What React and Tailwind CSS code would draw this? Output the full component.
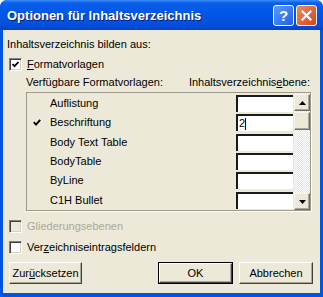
const rows = [
  { name: 'Auflistung', level: '' },
  { name: 'Beschriftung', level: '2', checked: true },
  { name: 'Body Text Table', level: '' },
  { name: 'BodyTable', level: '' },
  { name: 'ByLine', level: '' },
  { name: 'C1H Bullet', level: '' },
];

function CheckBox({ checked, disabled }) {
  return (
    <span
      className={`w-[13px] h-[13px] shrink-0 flex items-center justify-center border border-t-[#808080] border-l-[#808080] border-r-white border-b-white shadow-[inset_1px_1px_0_#404040,inset_-1px_-1px_0_#D4D0C8] ${
        disabled ? 'bg-[#ECE9D8]' : 'bg-white'
      }`}
    >
      {checked && (
        <svg width="7" height="7" viewBox="0 0 7 7">
          <path d="M0.5 3 L2.5 5.2 L6.5 1" stroke="#000" strokeWidth="1.8" fill="none" />
        </svg>
      )}
    </span>
  );
}

function Btn({ children, w, isDefault }) {
  return (
    <div className={`${w} h-[22px] ${isDefault ? 'border border-black' : ''}`}>
      <div className="w-full h-full flex items-center justify-center bg-[#ECE9D8] border border-t-white border-l-white border-r-[#404040] border-b-[#404040] shadow-[inset_-1px_-1px_0_#ACA899]">
        {children}
      </div>
    </div>
  );
}

function Arrow({ down }) {
  return (
    <div className="w-[16px] h-[17px] shrink-0 flex items-center justify-center bg-[#ECE9D8] border border-t-[#F5F4EE] border-l-[#F5F4EE] border-r-[#716F64] border-b-[#716F64] shadow-[inset_-1px_-1px_0_#ACA899]">
      <svg width="7" height="4" viewBox="0 0 7 4">
        <path d={down ? 'M0 0 H7 L3.5 4 Z' : 'M0 4 H7 L3.5 0 Z'} fill="#000" />
      </svg>
    </div>
  );
}

export default function App() {
  return (
    <div className="w-[323px] h-[297px] flex flex-col rounded-t-[7px] overflow-hidden bg-[#0054E3] font-['Liberation_Sans',Arial,sans-serif] text-[11px] leading-[13px] text-black">
      {/* title bar */}
      <div className="h-[30px] shrink-0 flex items-center pl-[7px] pr-[6px] bg-[linear-gradient(#3A8CF8_0px,#0A5FEA_3px,#0058E8_12px,#0450DD_24px,#0342C8_30px)]">
        <span className="flex-1 text-white font-bold text-[13px] [text-shadow:1px_1px_0_#0A1E6E]">
          Optionen für Inhaltsverzeichnis
        </span>
        <div className="w-[21px] h-[21px] rounded-[3px] border border-white bg-[linear-gradient(135deg,#5C9BFF,#1E5FE6)] flex items-center justify-center text-white font-bold text-[15px]">
          ?
        </div>
        <div className="w-[21px] h-[21px] ml-[2px] rounded-[3px] border border-white bg-[linear-gradient(135deg,#F08A60,#D8431A)] flex items-center justify-center">
          <svg width="11" height="11" viewBox="0 0 11 11">
            <path d="M1.5 1.5 L9.5 9.5 M9.5 1.5 L1.5 9.5" stroke="#fff" strokeWidth="2.2" strokeLinecap="square" />
          </svg>
        </div>
      </div>

      {/* body */}
      <div className="flex-1 mx-[3px] mb-[4px] bg-[#ECE9D8] pl-[4px] pr-[7px] pt-[8px] flex flex-col">
        <div>Inhaltsverzeichnis bilden aus:</div>

        <div className="mt-[7px] ml-[2px] flex items-center gap-[5px]">
          <CheckBox checked />
          <span>
            <u>F</u>ormatvorlagen
          </span>
        </div>

        <div className="mt-[5px] ml-[19px] mr-[3px] flex justify-between">
          <span>Verfügbare Formatvorlagen:</span>
          <span>
            Inhaltsverzeichnis<u>e</u>bene:
          </span>
        </div>

        <div className="mt-[3px] ml-[19px] mr-[2px] h-[119px] flex border border-[#9D9A8C] shadow-[1px_1px_0_#fff]">
          <div className="flex-1 flex flex-col pt-[0.5px]">
            {rows.map((r) => (
              <div key={r.name} className="h-[19.5px] flex items-center">
                <div className="w-[23px] pl-[6px] flex items-center">
                  {r.checked && (
                    <svg width="8" height="7" viewBox="0 0 8 7">
                      <path d="M0.8 3.2 L3 5.6 L7.2 0.8" stroke="#000" strokeWidth="1.9" fill="none" />
                    </svg>
                  )}
                </div>
                <span className="flex-1">{r.name}</span>
                <div className="w-[57px] h-[17px] mr-[1px] bg-white border-t-2 border-l-2 border-t-[#1a1a1a] border-l-[#1a1a1a] flex items-center pl-[1px]">
                  {r.level && (
                    <>
                      <span>{r.level}</span>
                      <span className="w-px h-[12px] bg-black" />
                    </>
                  )}
                </div>
              </div>
            ))}
          </div>
          <div className="w-[16px] flex flex-col bg-[repeating-conic-gradient(#ffffff_0%_25%,#E6E3D6_0%_50%)] bg-[length:2px_2px] pt-[1px]">
            <Arrow />
            <div className="w-[16px] h-[18px] mt-[1px] bg-[#ECE9D8] border border-t-[#F5F4EE] border-l-[#F5F4EE] border-r-[#716F64] border-b-[#716F64] shadow-[inset_-1px_-1px_0_#ACA899]" />
            <div className="flex-1" />
            <Arrow down />
          </div>
        </div>

        <div className="mt-[9px] ml-[2px] flex items-center gap-[5px] text-[#ACA899]">
          <CheckBox disabled />
          <span>Gliederungsebenen</span>
        </div>

        <div className="mt-[8px] ml-[2px] flex items-center gap-[5px]">
          <CheckBox />
          <span>
            Ver<u>z</u>eichniseintragsfeldern
          </span>
        </div>

        <div className="mt-[8px] ml-[2px] flex items-center">
          <Btn w="w-[73px]">
            <span>
              Zur<u>ü</u>cksetzen
            </span>
          </Btn>
          <div className="flex-1" />
          <Btn w="w-[75px]" isDefault>
            OK
          </Btn>
          <div className="w-[6px]" />
          <Btn w="w-[74px]">Abbrechen</Btn>
        </div>
      </div>
    </div>
  );
}
